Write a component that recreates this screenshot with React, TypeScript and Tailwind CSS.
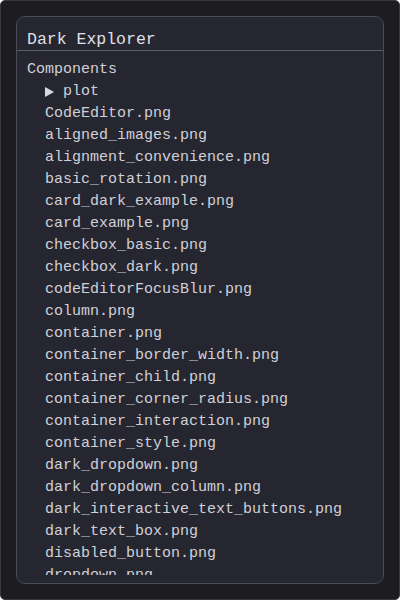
import React from 'react';

const files = [
  'CodeEditor.png',
  'aligned_images.png',
  'alignment_convenience.png',
  'basic_rotation.png',
  'card_dark_example.png',
  'card_example.png',
  'checkbox_basic.png',
  'checkbox_dark.png',
  'codeEditorFocusBlur.png',
  'column.png',
  'container.png',
  'container_border_width.png',
  'container_child.png',
  'container_corner_radius.png',
  'container_interaction.png',
  'container_style.png',
  'dark_dropdown.png',
  'dark_dropdown_column.png',
  'dark_interactive_text_buttons.png',
  'dark_text_box.png',
  'disabled_button.png',
  'dropdown.png',
  'dropdown_dark.png',
];

export default function App() {
  return (
    <div
      className="w-[400px] h-[600px] bg-[#1c1c21] border border-[#393940] rounded-[5px] p-[15px] text-[#d0d0d8]"
      style={{ fontFamily: '"Liberation Mono", "DejaVu Sans Mono", monospace' }}
    >
      <div className="h-full flex flex-col rounded-[9px] border border-[#4b4b56] bg-[#262630] overflow-hidden">
        {/* Header */}
        <div className="h-[34px] shrink-0 border-b border-[#5a5a66] px-[10px] pt-[12px] text-[16.5px] leading-[22px] text-[#e0e0e8]">
          Dark Explorer
        </div>

        {/* Tree */}
        <div className="flex-1 min-h-0 pb-[8px]">
          <div className="h-full overflow-hidden pt-[8px] px-[10px] text-[15px] leading-[22px]">
            <div>Components</div>
            <div className="pl-[18px]">
              <div className="flex items-center">
                <span className="w-[18px] flex items-center">
                  <svg width="9" height="10" viewBox="0 0 9 10">
                    <polygon points="0,0 9,5 0,10" fill="#d8d8e0" />
                  </svg>
                </span>
                <span>plot</span>
              </div>
              {files.map((f) => (
                <div key={f} className="whitespace-nowrap">
                  {f}
                </div>
              ))}
            </div>
          </div>
        </div>
      </div>
    </div>
  );
}
